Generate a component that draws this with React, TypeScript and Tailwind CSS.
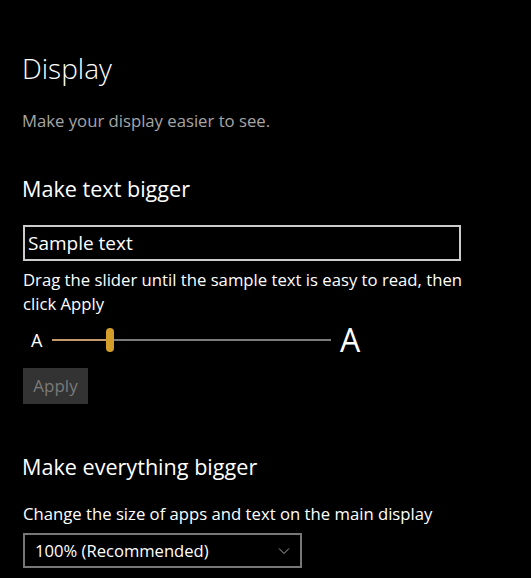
import React from "react";

export default function App() {
  return (
    <div
      className="w-[531px] h-[578px] bg-black text-white overflow-hidden pl-[22px]"
      style={{ fontFamily: "'Open Sans', 'Noto Sans', sans-serif" }}
    >
      <h1 className="mt-[50px] text-[28px] leading-[36px] font-light text-white">Display</h1>
      <p className="mt-[23px] text-[16.7px] leading-[24px] text-[#a6a6a6]">
        Make your display easier to see.
      </p>
      <h2 className="mt-[41px] text-[21.6px] leading-[30px] text-white">Make text bigger</h2>
      <div className="mt-[21px] ml-[1px] w-[438px] h-[36px] border-2 border-[#cccccc] flex items-center pl-[3px]">
        <span className="text-[19px] leading-[24px] text-white">Sample text</span>
      </div>
      <p className="mt-[7px] ml-[1px] w-[450px] text-[16.7px] leading-[24px] text-white">
        Drag the slider until the sample text is easy to read, then click Apply
      </p>
      <div className="mt-[12px] ml-[9px] flex items-center h-[24px]">
        <span className="text-[18px] leading-[24px] text-white w-[21px]">A</span>
        <div className="relative w-[279px] h-[24px] flex items-center">
          <div className="h-[2px] w-[56px] bg-[#c49a6c]" />
          <div className="h-[2px] flex-1 bg-[#7a7a7a]" />
          <div className="absolute left-[54px] top-0 w-[8px] h-[24px] rounded-full bg-[#d59e2a]" />
        </div>
        <span className="ml-[9px] text-[32px] leading-[24px] text-white">A</span>
      </div>
      <button className="mt-[16px] ml-[1px] w-[65px] h-[36px] bg-[#333333] text-[#7a7a7a] text-[17px] flex items-center justify-center">
        Apply
      </button>
      <h2 className="mt-[48px] text-[21.6px] leading-[30px] text-white">Make everything bigger</h2>
      <p className="mt-[20px] ml-[1px] text-[16.7px] leading-[24px] text-white">
        Change the size of apps and text on the main display
      </p>
      <div className="mt-[7px] ml-[1px] w-[279px] h-[35px] border-2 border-[#777777] flex items-center justify-between pl-[10px] pr-[10px]">
        <span className="text-[16.6px] leading-[24px] text-white">100% (Recommended)</span>
        <svg width="12" height="8" viewBox="0 0 12 8" fill="none">
          <path d="M1 1.5 L6 6.5 L11 1.5" stroke="#aaaaaa" strokeWidth="1" />
        </svg>
      </div>
    </div>
  );
}
